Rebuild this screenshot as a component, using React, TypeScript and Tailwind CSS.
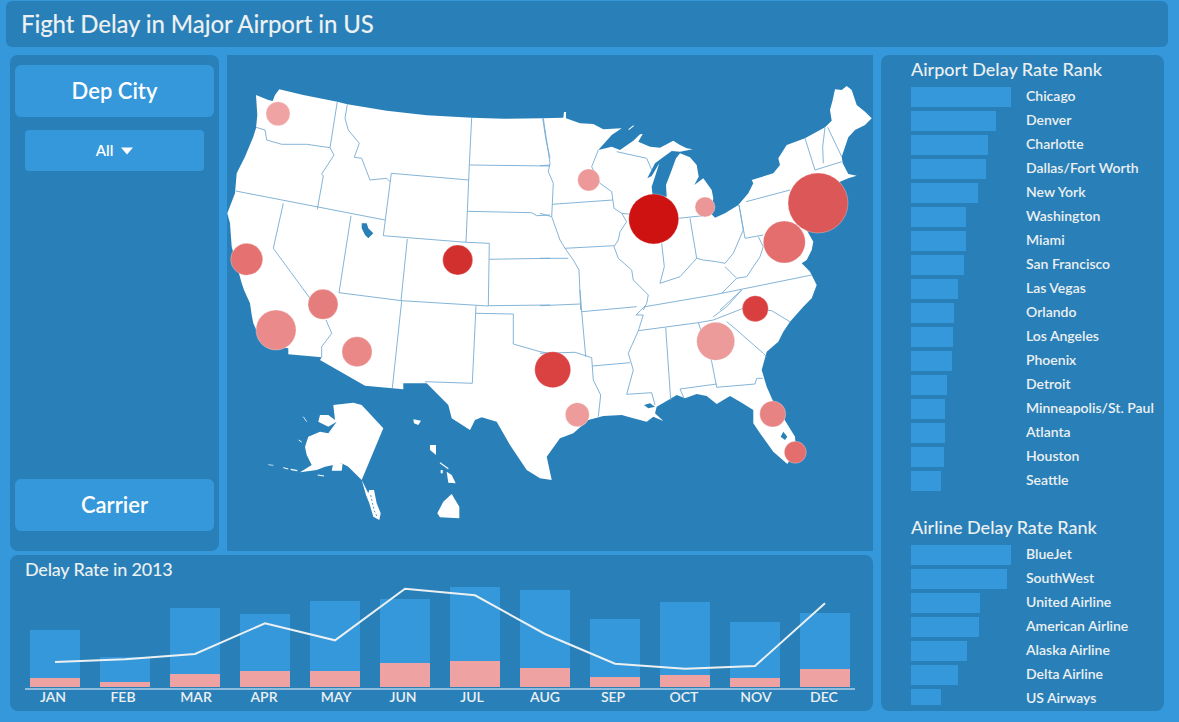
import React from 'react';

const months = [
  { name: 'JAN', top: 57, low: 9, dx: 0 },
  { name: 'FEB', top: 30, low: 5, dx: 0 },
  { name: 'MAR', top: 79, low: 13, dx: 3 },
  { name: 'APR', top: 73, low: 16, dx: 1 },
  { name: 'MAY', top: 86, low: 16, dx: 3 },
  { name: 'JUN', top: 88, low: 24, dx: 0 },
  { name: 'JUL', top: 100, low: 26, dx: -1 },
  { name: 'AUG', top: 97, low: 19, dx: 2 },
  { name: 'SEP', top: 68, low: 10, dx: 0 },
  { name: 'OCT', top: 85, low: 12, dx: 1 },
  { name: 'NOV', top: 65, low: 9, dx: 3 },
  { name: 'DEC', top: 74, low: 18, dx: 1 },
];

type Row = [string, number, number?];

const airports: Row[] = [
  ['Chicago', 100], ['Denver', 85], ['Charlotte', 77], ['Dallas/Fort Worth', 75], ['New York', 67],
  ['Washington', 55], ['Miami', 55], ['San Francisco', 53], ['Las Vegas', 47], ['Orlando', 43],
  ['Los Angeles', 42], ['Phoenix', 41], ['Detroit', 36], ['Minneapolis/St. Paul', 34], ['Atlanta', 34],
  ['Houston', 33], ['Seattle', 30],
];

const airlines: Row[] = [
  ['BlueJet', 100], ['SouthWest', 96], ['United Airline', 69], ['American Airline', 68],
  ['Alaska Airline', 56], ['Delta Airline', 47], ['US Airways', 30, 16],
];

const cities = [
  { x: 278, y: 113.7, r: 12, c: '#F0A3A3' },
  { x: 588.7, y: 180, r: 11, c: '#EE9999' },
  { x: 705, y: 207, r: 10, c: '#EC9797' },
  { x: 653.7, y: 219, r: 25, c: '#CE1212' },
  { x: 818, y: 203, r: 30, c: '#DC5858' },
  { x: 784.3, y: 242, r: 21, c: '#E46E6E' },
  { x: 457.7, y: 260, r: 15, c: '#D22F2F' },
  { x: 246.7, y: 259.3, r: 16, c: '#E57171' },
  { x: 323, y: 304.3, r: 15, c: '#E67D7D' },
  { x: 276, y: 330, r: 20, c: '#EA8A8A' },
  { x: 357, y: 351.7, r: 15, c: '#EA8787' },
  { x: 552.7, y: 369.7, r: 18, c: '#DA4242' },
  { x: 577.3, y: 414.7, r: 12, c: '#EE9B9B' },
  { x: 755.3, y: 308.7, r: 13, c: '#DA3F3F' },
  { x: 715.7, y: 341.3, r: 19, c: '#EC9A9A' },
  { x: 772.7, y: 414, r: 13, c: '#E88383' },
  { x: 795.3, y: 452.3, r: 11, c: '#E46E6E' },
];

// traced at 3x from the top-left of each map area
const seg = (ox: number, oy: number, s: string) =>
  s.trim().split(/\s+/).map((p) => {
    const [a, b] = p.split(',').map(Number);
    return `${(ox + a / 3).toFixed(1)} ${(oy + b / 3).toFixed(1)}`;
  });

const outline = [
  ...seg(220, 50, '178,118 250,135 352,155 382,163 500,182 620,196 755,203 850,206 968,205'),
  ...seg(540, 50, `70,203 72,186 78,186 78,205 120,220 160,222 190,238 245,235 215,255 175,300 215,290 240,300 280,272 300,253 308,252 295,275
    330,290 360,293 400,272 420,285 440,295 458,298 420,305 395,303 365,325 345,340 322,385 335,378 358,340 345,380 335,410 338,440 380,440 378,405
    395,360 408,325 420,310 450,322 470,345 476,380 463,405 490,385 515,420 520,445 512,490 525,503 555,490 595,465 625,430 640,400 635,390 700,370
    720,345 715,325 740,285 795,265 855,232 875,212 870,180 878,150 885,118 905,120 920,108 935,120 950,165 975,185 995,205 975,225 945,240 925,262 905,320 908,340 925,372 950,377 925,385
    900,395 885,420 900,450 920,470 860,540 800,540 820,575 815,600 800,630 785,640 800,655 810,665 830,705 815,745 790,770`),
  ...seg(540, 290, `750,95 730,125 715,155 680,185 665,240 680,290 700,335 740,400 765,440 768,480 742,522 700,485 660,430 640,400 640,360 600,335
    570,318 530,342 500,318 470,312 435,325 410,315 385,330 350,350 345,370 370,393 340,380 320,395 280,385 245,375 190,378 145,390 100,430 60,445
    20,500 35,570 0,565`),
  ...seg(220, 290, `920,540 870,465 830,395 785,382 765,390 750,420 695,385 685,345 620,280 550,280 550,298 435,287 300,210 305,202 205,193 205,175
    130,165 100,100 95,75 90,40 72,0`),
  ...seg(220, 50, '65,700 35,590 30,520 22,490 45,430 50,370 75,320 100,260 108,235 112,195 108,135 145,150 158,153 165,135 170,128'),
];

const borders: [number, number, string[]][] = [
  [220, 50, [
    '352,155 330,293',
    '382,163 375,205 385,240 418,280 403,322 425,325 450,390 500,385 510,395',
    '108,232 135,240 140,270 185,283 260,283 330,293 342,315 305,372 310,378 292,478',
    '47,423 495,510',
    '190,460 160,595 270,745',
    '393,497 357,728 545,752 805,768',
    '514,370 746,390',
    '514,370 490,557 738,577 808,580 805,768',
    '755,203 748,345 746,390 738,577',
    '748,345 990,348',
    '742,484 935,488 950,497 990,495',
    '562,567 543,752',
    '808,628 990,625',
    '968,205 978,270 990,325',
  ]],
  [220, 290, [
    '805,47 990,45',
    '545,32 517,295',
    '768,47 757,280 615,275',
    '768,70 880,72 880,162 960,185 990,190',
    '318,90 335,130 305,170 305,202',
  ]],
  [540, 50, [
    '10,205 30,340 25,365 40,400 37,463 218,450',
    '0,347 30,345',
    '175,300 155,350 180,400 215,425 222,475 245,490 260,515 240,545 235,570 222,590 235,625 275,660 280,690 325,735 320,760 310,780',
    '37,463 35,500 60,570 75,595 100,630 117,660 122,780',
    '0,490 35,500',
    '75,595 222,587',
    '0,625 85,625',
    '230,305 320,325 335,360',
    '245,490 335,500',
    '415,505 510,495',
    '450,505 470,625',
    '365,580 373,650 360,700 420,680 470,625 490,630 530,635 555,640 580,610 610,540 597,465 615,565 670,555',
    '618,455 750,420',
    '555,650 590,685 620,680 660,620 670,590 655,560',
    '590,685 545,730',
    '315,770 520,735 815,675',
    '795,265 825,360 905,335',
    '855,232 848,290 850,340',
    '863,232 905,320',
    '605,720 540,780',
  ]],
  [540, 290, [
    '520,80 560,50 605,0',
    '295,122 475,98 520,90 610,55 695,62 750,95',
    '560,95 590,120 670,190 680,200',
    '475,98 515,215 530,292 645,282 650,265 668,265',
    '420,297 530,282',
    '420,297 432,325',
    '377,113 392,330',
    '295,122 265,190 280,240 260,313 335,308 345,345',
    '315,48 288,75 310,75 295,122',
    '125,65 290,50',
    '0,47 120,42',
    '120,0 125,65 137,200',
    '0,190 105,187 155,203',
    '157,228 270,218',
    '155,203 160,270 182,315 175,380',
  ]],
];

const poly = (ox: number, oy: number, s: string) => seg(ox, oy, s).join(' ');

const lake = '#2980B9';

function UsMap() {
  return (
    <svg viewBox="227 55 646 496" className="block w-full h-full">
      <polygon points={outline.join(' ')} fill="#fff" />
      {/* lakes */}
      <polygon points={poly(220, 50, '425,520 440,520 445,535 460,550 445,565 435,555 425,535')} fill={lake} />
      <polygon points={poly(540, 290, '730,425 742,440 735,450 722,440')} fill={lake} />
      <polygon points={poly(540, 290, '312,345 330,340 345,350 325,355')} fill={lake} />
      {/* isle royale */}
      <polygon points={poly(540, 50, '265,238 280,226 282,228 267,240')} fill="#fff" />
      {borders.map(([ox, oy, lines]) =>
        lines.map((l, i) => (
          <polyline key={`${ox}-${oy}-${i}`} points={poly(ox, oy, l)} fill="none" stroke="#76ABD3" strokeWidth={0.9} />
        )),
      )}
      {/* alaska */}
      <polygon
        points={poly(220, 290, `340,345 400,338 425,345 490,415 425,570 385,530 365,520 340,525 315,530 290,540 240,547 275,525 260,495 255,470 265,440 300,425
          325,430 350,395 325,410 295,395 300,375 325,375 345,390`)}
        fill="#fff"
      />
      <polygon points={poly(220, 290, '340,520 368,520 365,542 335,542')} fill="#fff" />
      <polygon points={poly(220, 290, '425,570 445,610 448,600 462,600 470,640 482,670 478,690 460,680 448,640 438,615')} fill="#fff" />
      <polyline points={poly(220, 290, '452,615 462,660 470,678')} stroke={lake} strokeWidth={0.8} strokeDasharray="2 2" fill="none" />
      <polyline points={poly(220, 290, '145,524 160,526')} stroke="#fff" strokeWidth={0.7} fill="none" />
      <polyline points={poly(220, 290, '190,533 205,537')} stroke="#fff" strokeWidth={1} fill="none" />
      <polyline points={poly(220, 290, '212,538 232,542')} stroke="#fff" strokeWidth={1.2} fill="none" />
      <polyline points={poly(220, 290, '293,555 312,558')} stroke="#fff" strokeWidth={1.2} fill="none" />
      <polyline points={poly(220, 290, '250,380 260,395')} stroke="#fff" strokeWidth={0.8} fill="none" />
      <polyline points={poly(220, 290, '236,450 245,456')} stroke="#fff" strokeWidth={1} fill="none" />
      {/* hawaii */}
      <polygon points={poly(220, 290, '695,612 718,650 718,685 660,682 652,670 670,635')} fill="#fff" />
      <polygon points={poly(220, 290, '680,545 695,555 707,580 685,578')} fill="#fff" />
      <polyline points={poly(220, 290, '660,518 685,536')} stroke="#fff" strokeWidth={1.1} fill="none" />
      <polygon points={poly(220, 290, '630,465 648,465 648,495 630,480')} fill="#fff" />
      <polygon points={poly(220, 290, '580,388 603,392 595,405 582,400')} fill="#fff" />
      <polygon points={poly(220, 290, '662,540 668,540 668,550 662,550')} fill="#fff" />
      {cities.map((c) => (
        <circle key={`${c.x}`} cx={c.x} cy={c.y} r={c.r} fill={c.c} stroke="#fff" strokeOpacity={0.35} strokeWidth={0.8} />
      ))}
    </svg>
  );
}

const linePoints =
  '25,72 95,69.3 165,64 235,33.3 305,50.3 375,-1.3 445,5.3 515,44 585,73.7 655,78.7 725,76 795,13.3';

function DelayChart() {
  return (
    <div className="relative mt-[7px] ml-[15px] w-[830px]">
      <div className="flex items-end gap-[20px] pl-[5px] h-[100px] pb-px border-b-2 border-[#8FBCDD] box-content">
        {months.map((m) => (
          <div key={m.name} className="w-[50px] bg-[#3498DB] flex flex-col justify-end" style={{ height: m.top }}>
            <div className="bg-[#EFA2A2]" style={{ height: m.low }} />
          </div>
        ))}
      </div>
      <div className="flex gap-[20px] pl-[3px]">
        {months.map((m) => (
          <span
            key={m.name}
            className="w-[50px] text-center text-[14px] leading-[14px] font-semibold text-[#ECF0F1]"
            style={{ transform: `translateX(${m.dx}px)` }}
          >
            {m.name}
          </span>
        ))}
      </div>
      <svg className="absolute left-[5px] top-[3px] overflow-visible" width="825" height="88" fill="none">
        <polyline points={linePoints} stroke="#ECF0F1" strokeWidth={2} />
      </svg>
    </div>
  );
}

function RankList({ rows }: { rows: Row[] }) {
  return (
    <div className="mt-[7px] flex flex-col gap-[4px]">
      {rows.map(([name, w, h]) => (
        <div key={name} className="flex items-start h-[20px]">
          <div className="w-[115px] shrink-0">
            <div className="bg-[#3498DB]" style={{ width: w, height: h ?? 20 }} />
          </div>
          <span className="text-[14px] leading-[18px] font-semibold text-[#ECF0F1] whitespace-nowrap">{name}</span>
        </div>
      ))}
    </div>
  );
}

export default function App() {
  return (
    <div className="w-[1179px] h-[722px] overflow-hidden bg-[#3498DB] pt-px font-['Lato','Open_Sans',sans-serif]">
      <div className="ml-[6px] w-[1162px] h-[46px] rounded-md bg-[#2980B9] pl-[15px] flex items-center">
        <h1 className="text-[24px] font-medium tracking-[-0.1px] text-[#ECF0F1]">Fight Delay in Major Airport in US</h1>
      </div>

      <div className="mt-[8px] ml-[10px] flex gap-[8px]">
        <div className="w-[863px] flex flex-col gap-[4px]">
          <div className="flex gap-[8px] h-[496px]">
            <aside className="w-[209px] rounded-lg bg-[#2980B9] px-[5px] pt-[10px] pb-[20px] flex flex-col">
              <div className="h-[52px] pb-[2px] rounded-md bg-[#3498DB] flex items-center justify-center text-[22px] font-semibold text-white">
                Dep City
              </div>
              <button className="mt-[13px] mx-[10px] h-[41px] rounded-[4px] bg-[#3498DB] flex items-center justify-center gap-[8px] text-[15px] font-semibold text-white">
                All
                <svg width="12" height="8" viewBox="0 0 12 8"><path d="M0 0.5h12L6 7.5z" fill="#fff" /></svg>
              </button>
              <div className="mt-auto h-[52px] pb-[2px] rounded-md bg-[#3498DB] flex items-center justify-center text-[22px] font-semibold text-white">
                Carrier
              </div>
            </aside>
            <div className="w-[646px] bg-[#2980B9]">
              <UsMap />
            </div>
          </div>
          <section className="h-[156px] rounded-lg bg-[#2980B9] pt-[3px]">
            <h2 className="ml-[15px] text-[18px] leading-[22px] font-medium text-[#ECF0F1] tracking-[-0.2px]">Delay Rate in 2013</h2>
            <DelayChart />
          </section>
        </div>

        <aside className="w-[283px] h-[656px] rounded-lg bg-[#2980B9] pl-[30px] pt-[3px] overflow-hidden">
          <h2 className="text-[18px] leading-[22px] font-medium text-[#ECF0F1]">Airport Delay Rate Rank</h2>
          <RankList rows={airports} />
          <h2 className="mt-[25px] text-[18px] leading-[22px] font-medium text-[#ECF0F1]">Airline Delay Rate Rank</h2>
          <RankList rows={airlines} />
        </aside>
      </div>
    </div>
  );
}
